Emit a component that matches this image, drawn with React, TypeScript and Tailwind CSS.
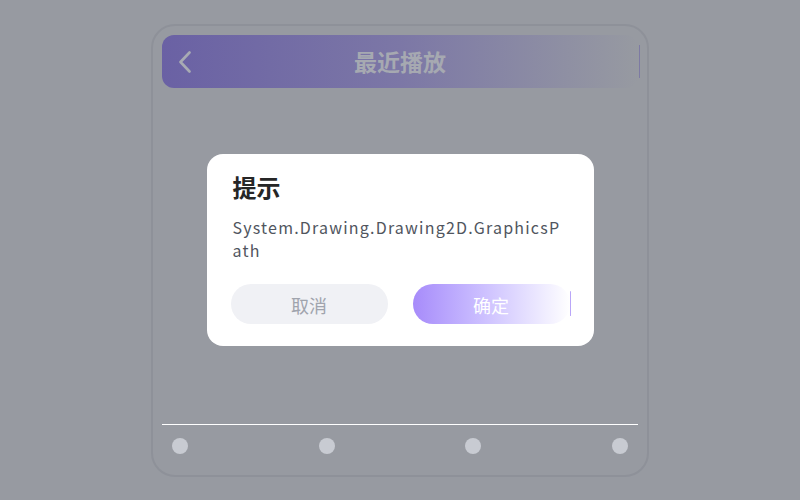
const tabs = [0, 1, 2, 3];

export default function App() {
  return (
    <div className="relative w-[800px] h-[500px] bg-[#979aa1] font-['Noto_Sans_CJK_SC','Noto_Sans',sans-serif] overflow-hidden">
      <div className="pt-[24px] flex justify-center">
        <div className="w-[498px] h-[453px] rounded-[24px] border-2 border-[#8e9199] p-[9px] flex flex-col">
          <header className="h-[53px] rounded-[12px] bg-linear-to-r from-[#6a61a4] via-[#7c77a6] to-[#979aa1] grid grid-cols-[1fr_auto_1fr] items-center">
            <div className="pl-[17px] flex items-center">
              <svg width="14" height="24" viewBox="0 0 14 24" fill="none">
                <path d="M10.5 2.5 1.5 12l9 9.5" stroke="#a8abb3" strokeWidth="2.6" strokeLinecap="round" strokeLinejoin="round" />
              </svg>
            </div>
            <h1 className="text-[23px] font-bold text-[#a6a9b1] leading-none">最近播放</h1>
            <div className="flex justify-end">
              <span className="w-px h-[33px] bg-[#7d7aa3] translate-x-[2px]" />
            </div>
          </header>
          <div className="flex-1" />
          <div className="h-px bg-white" />
          <div className="flex justify-between px-[10px] pt-[13px] pb-[12px]">
            {tabs.map((t) => (
              <span key={t} className="w-[16px] h-[16px] rounded-full bg-[#c8cbd2]" />
            ))}
          </div>
        </div>
      </div>

      <div className="absolute inset-0 flex items-center justify-center">
        <div className="w-[387px] bg-white rounded-[16px] px-6 pt-[17px] pb-[22px]">
          <h2 className="pl-[2px] text-[24px] leading-[32px] font-bold text-[#262626]">提示</h2>
          <p className="mt-[13px] pl-[2px] pr-[6px] text-[16px] leading-[23px] tracking-[1.2px] text-[#50555e] break-all">
            System.Drawing.Drawing2D.GraphicsPath
          </p>
          <div className="mt-[22px] flex gap-[25px]">
            <button className="flex-1 h-[40px] pt-[2px] rounded-full bg-[#f0f1f5] text-[18px] text-[#a0a4ad]">
              取消
            </button>
            <button className="relative flex-1 h-[40px] pt-[2px] rounded-full bg-linear-to-r from-[#a78bfa] to-white text-[18px] text-white">
              确定
              <span className="absolute -right-px top-[7px] w-px h-[25px] rounded-full bg-[#b9a6f8]" />
            </button>
          </div>
        </div>
      </div>
    </div>
  );
}
